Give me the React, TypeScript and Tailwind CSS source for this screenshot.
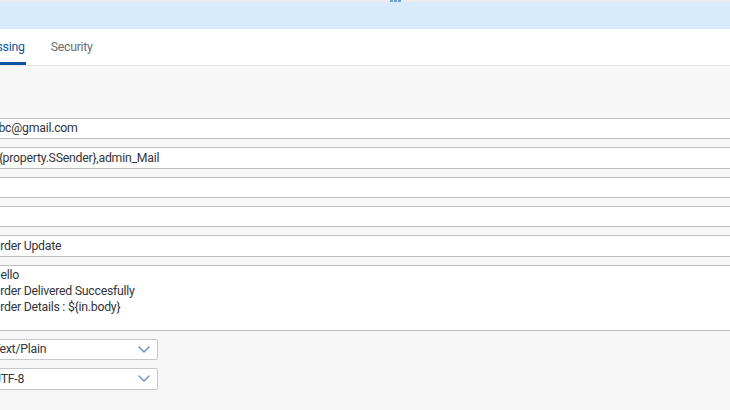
import React from "react";

function Chevron() {
  return (
    <svg width="12" height="7" viewBox="0 0 12 7" fill="none">
      <path d="M1 1l5 5 5-5" stroke="#5b8ccc" strokeWidth="1.3" strokeLinecap="round" strokeLinejoin="round" />
    </svg>
  );
}

function Input({ value }: { value: string }) {
  return (
    <div className="h-[21.33px] w-full bg-white border border-[#b9bdc1] flex items-center pl-[8px] text-[12.3px] tracking-[-0.25px] text-[#32363a] whitespace-nowrap">
      {value}
    </div>
  );
}

function Select({ value }: { value: string }) {
  return (
    <div className="h-[21.33px] w-[175px] bg-white border border-[#c6c8cb] rounded-[2px] flex items-center justify-between pl-[9px] pr-[7px] text-[12.3px] tracking-[-0.25px] text-[#32363a]">
      <span>{value}</span>
      <Chevron />
    </div>
  );
}

export default function App() {
  return (
    <div
      className="w-[730px] h-[410px] overflow-hidden bg-[#f7f7f7] flex flex-col"
      style={{ fontFamily: "Roboto, 'Liberation Sans', sans-serif" }}
    >
      <div className="h-[2px] bg-[#ebebeb] relative shrink-0">
        <div className="absolute left-[390px] top-0 flex gap-[1px]">
          <div className="w-[3px] h-[2px] bg-[#6e9fd4]" />
          <div className="w-[3px] h-[2px] bg-[#6e9fd4]" />
          <div className="w-[3px] h-[2px] bg-[#6e9fd4]" />
        </div>
      </div>
      <div className="h-[27px] bg-[#d8ebfc] shrink-0" />
      <div className="h-[37px] bg-white border-b border-[#e5e5e5] shrink-0 flex items-stretch gap-[25px] ml-[-35px] text-[12.3px] tracking-[-0.25px]">
        <div className="relative flex items-center px-[1px] text-[#0854a0]">
          <span>Processing</span>
          <div className="absolute left-0 right-0 bottom-0 h-[3px] bg-[#0854a0]" />
        </div>
        <div className="flex items-center text-[#6a6d70]">Security</div>
      </div>
      <div className="flex-1 pt-[52px] ml-[-17px] w-[770px] flex flex-col gap-[8px]">
        <Input value="abc@gmail.com" />
        <Input value="${property.SSender},admin_Mail" />
        <Input value="" />
        <Input value="" />
        <Input value="Order Update" />
        <div className="h-[66.33px] w-full bg-white border border-[#b9bdc1] pl-[8px] pt-[1px] text-[12.3px] tracking-[-0.25px] leading-[16.4px] text-[#32363a]">
          <div>Hello</div>
          <div>Order Delivered Succesfully</div>
          <div>Order Details : ${"{in.body}"}</div>
        </div>
        <Select value="Text/Plain" />
        <Select value="UTF-8" />
      </div>
    </div>
  );
}
